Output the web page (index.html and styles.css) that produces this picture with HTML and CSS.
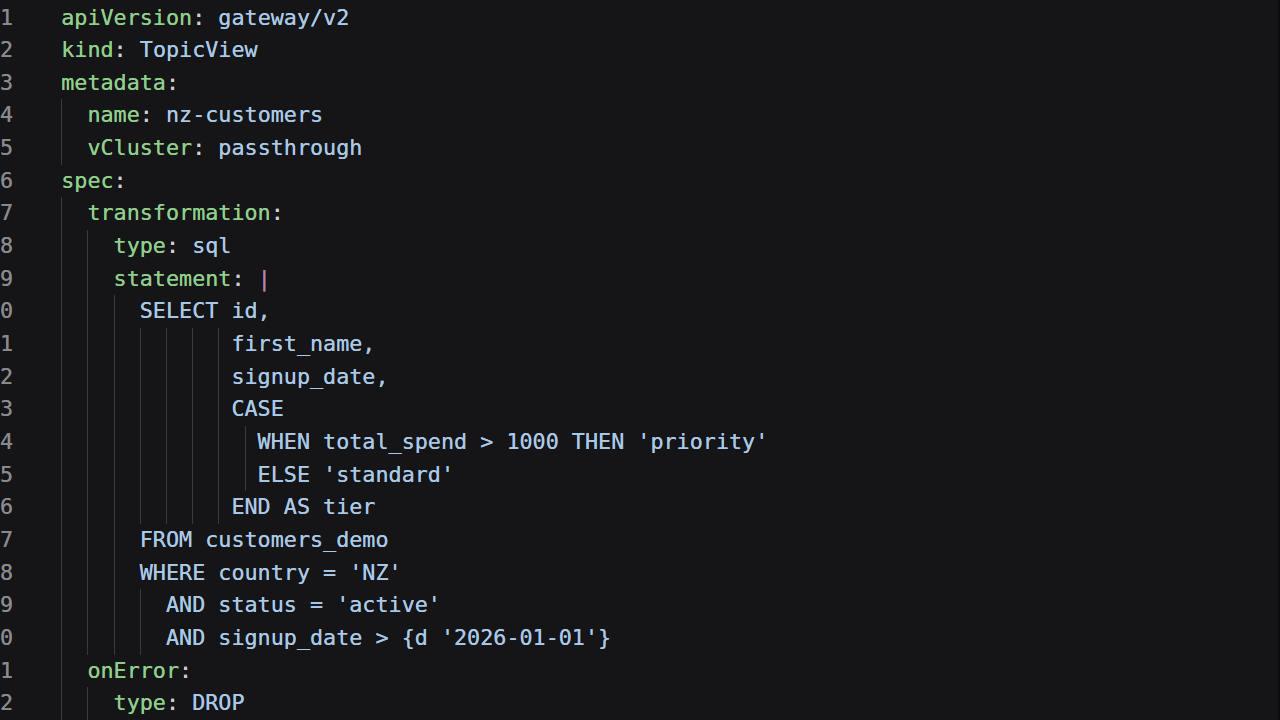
FILE: index.html
```html
<!DOCTYPE html>
<html lang="en">
<head>
<meta charset="utf-8">
<title>topicview.yaml</title>
<link rel="stylesheet" href="styles.css">
</head>
<body>
<main class="editor">
  <div class="line"><span class="ln">1</span><span class="code"><span class="k">apiVersion</span><span class="p">:</span> <span class="v">gateway/v2</span></span></div>
  <div class="line"><span class="ln">2</span><span class="code"><span class="k">kind</span><span class="p">:</span> <span class="v">TopicView</span></span></div>
  <div class="line"><span class="ln">3</span><span class="code"><span class="k">metadata</span><span class="p">:</span></span></div>
  <div class="line"><span class="ln">4</span><span class="code"><span class="ind"></span><span class="k">name</span><span class="p">:</span> <span class="v">nz-customers</span></span></div>
  <div class="line"><span class="ln">5</span><span class="code"><span class="ind"></span><span class="k">vCluster</span><span class="p">:</span> <span class="v">passthrough</span></span></div>
  <div class="line"><span class="ln">6</span><span class="code"><span class="k">spec</span><span class="p">:</span></span></div>
  <div class="line"><span class="ln">7</span><span class="code"><span class="ind"></span><span class="k">transformation</span><span class="p">:</span></span></div>
  <div class="line"><span class="ln">8</span><span class="code"><span class="ind"></span><span class="ind"></span><span class="k">type</span><span class="p">:</span> <span class="v">sql</span></span></div>
  <div class="line"><span class="ln">9</span><span class="code"><span class="ind"></span><span class="ind"></span><span class="k">statement</span><span class="p">:</span> <span class="pipe">|</span></span></div>
  <div class="line"><span class="ln">10</span><span class="code"><span class="ind"></span><span class="ind"></span><span class="ind"></span><span class="v">SELECT id,</span></span></div>
  <div class="line"><span class="ln">11</span><span class="code"><span class="ind"></span><span class="ind"></span><span class="ind"></span><span class="ind"></span><span class="ind"></span><span class="ind"></span><span class="ind1"></span><span class="v">first_name,</span></span></div>
  <div class="line"><span class="ln">12</span><span class="code"><span class="ind"></span><span class="ind"></span><span class="ind"></span><span class="ind"></span><span class="ind"></span><span class="ind"></span><span class="ind1"></span><span class="v">signup_date,</span></span></div>
  <div class="line"><span class="ln">13</span><span class="code"><span class="ind"></span><span class="ind"></span><span class="ind"></span><span class="ind"></span><span class="ind"></span><span class="ind"></span><span class="ind1"></span><span class="v">CASE</span></span></div>
  <div class="line"><span class="ln">14</span><span class="code"><span class="ind"></span><span class="ind"></span><span class="ind"></span><span class="ind"></span><span class="ind"></span><span class="ind"></span><span class="ind"></span><span class="ind1"></span><span class="v">WHEN total_spend &gt; 1000 THEN 'priority'</span></span></div>
  <div class="line"><span class="ln">15</span><span class="code"><span class="ind"></span><span class="ind"></span><span class="ind"></span><span class="ind"></span><span class="ind"></span><span class="ind"></span><span class="ind"></span><span class="ind1"></span><span class="v">ELSE 'standard'</span></span></div>
  <div class="line"><span class="ln">16</span><span class="code"><span class="ind"></span><span class="ind"></span><span class="ind"></span><span class="ind"></span><span class="ind"></span><span class="ind"></span><span class="ind1"></span><span class="v">END AS tier</span></span></div>
  <div class="line"><span class="ln">17</span><span class="code"><span class="ind"></span><span class="ind"></span><span class="ind"></span><span class="v">FROM customers_demo</span></span></div>
  <div class="line"><span class="ln">18</span><span class="code"><span class="ind"></span><span class="ind"></span><span class="ind"></span><span class="v">WHERE country = 'NZ'</span></span></div>
  <div class="line"><span class="ln">19</span><span class="code"><span class="ind"></span><span class="ind"></span><span class="ind"></span><span class="ind"></span><span class="v">AND status = 'active'</span></span></div>
  <div class="line"><span class="ln">20</span><span class="code"><span class="ind"></span><span class="ind"></span><span class="ind"></span><span class="ind"></span><span class="v">AND signup_date &gt; {d '2026-01-01'}</span></span></div>
  <div class="line"><span class="ln">21</span><span class="code"><span class="ind"></span><span class="k">onError</span><span class="p">:</span></span></div>
  <div class="line"><span class="ln">22</span><span class="code"><span class="ind"></span><span class="ind"></span><span class="k">type</span><span class="p">:</span> <span class="v">DROP</span></span></div>
</main>
</body>
</html>
```

FILE: styles.css
```css
html, body {
  margin: 0;
  padding: 0;
  height: 100%;
  background: #151517;
  overflow: hidden;
}

.editor {
  height: 720px;
  box-sizing: border-box;
  padding-top: 1.5px;
  margin-left: -13px;
  border-right: 2px solid #0c0c0d;
  font-family: "DejaVu Sans Mono", "Liberation Mono", monospace;
  font-size: 21.75px;
  line-height: 32.67px;
  text-shadow: 0 0 0.5px currentColor;
}

.line {
  display: flex;
  height: 32.67px;
}

.ln {
  width: 2ch;
  text-align: right;
  color: #8a8a8d;
  flex: none;
  padding-right: 48px;
}

.code {
  display: block;
  white-space: pre;
  height: 32.67px;
}

.ind,
.ind1 {
  display: inline-block;
  box-sizing: border-box;
  width: 2ch;
  height: 32.67px;
  vertical-align: top;
  border-left: 1px solid #3a3a3d;
}

.ind1 {
  width: 1ch;
}

.k {
  color: #8fcf8b;
}

.p {
  color: #cfcfd1;
}

.v {
  color: #a9c9e8;
}

.pipe {
  color: #b583b3;
}
```
